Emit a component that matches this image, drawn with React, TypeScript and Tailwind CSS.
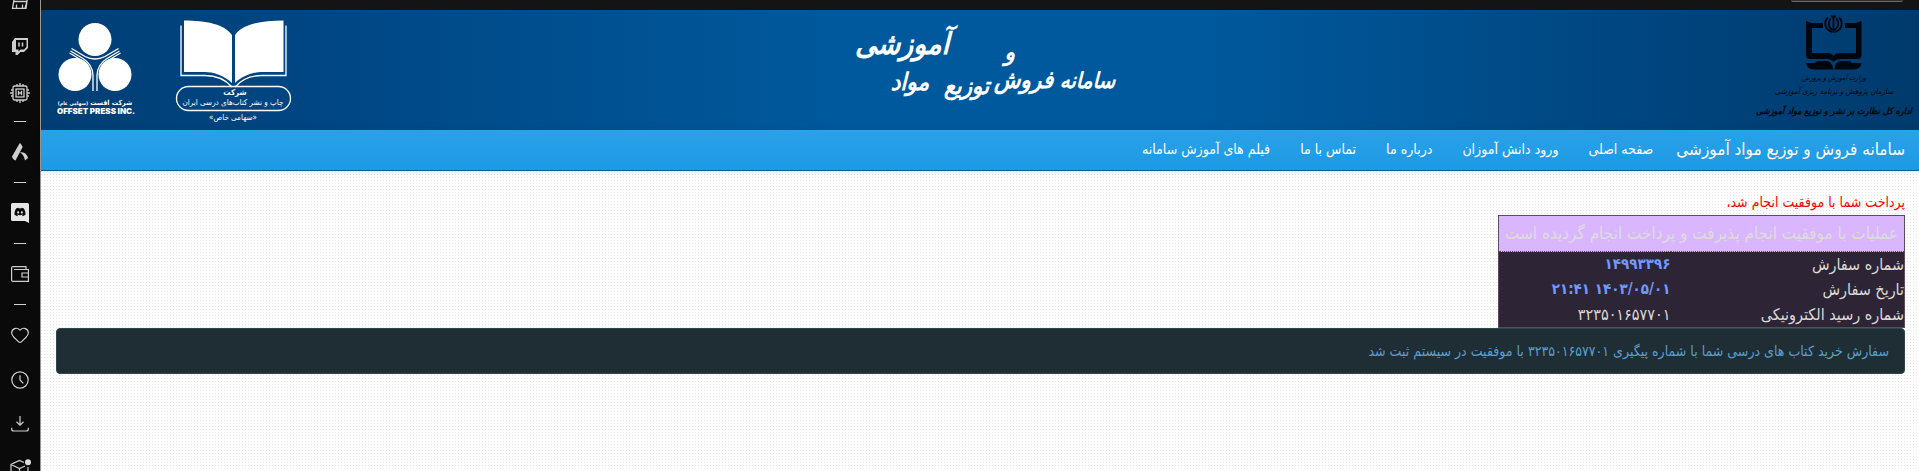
import React from "react";
import { FaDiscord } from "react-icons/fa";
import { Heart } from "lucide-react";

function Divider() {
  return <hr className="w-3 shrink-0 border-0 border-t border-[#d0d0d0]" />;
}

function RailLink({ label, children }: { label: string; children: React.ReactNode }) {
  return (
    <a href="#" aria-label={label} className="flex h-5 w-full shrink-0 items-center justify-center">
      {children}
    </a>
  );
}

function Rail() {
  return (
    <aside className="h-screen w-[41px] shrink-0 overflow-hidden border-r border-[#9a9a9a] bg-[#0a0a0a] text-[#cfcfcf]">
      <nav aria-label="Sidebar" className="flex flex-col items-center">
        <div className="flex h-[37px] w-full shrink-0 flex-col">
          <RailLink label="Marketplace">
            <svg width="18" height="20" viewBox="0 0 18 20" fill="none" stroke="currentColor" strokeWidth="1.3">
              <path d="M4 -6 1.500 8.400H15L17 -6M2.500 1.500H16M5.500 8V4.500M11.500 8V4.500M14 8.400 16 1.500" />
            </svg>
          </RailLink>
        </div>
        <RailLink label="Twitch">
          <svg width="18" height="18" viewBox="0 0 18 18" fill="none">
            <path d="M4 0H17V10L13 14H9.500L6.500 17H4.500V14H1V4Z" fill="currentColor" />
            <path d="M5 2H15.500V9L13 11.500H9.500L7.500 13.500V11.500H5Z" fill="#0a0a0a" />
            <path d="M8 4.500V8.500M11.500 4.500V8.500" stroke="currentColor" strokeWidth="1.500" />
          </svg>
        </RailLink>
        <div className="h-[26px]" />
        <RailLink label="Hardware">
          <svg width="20" height="20" viewBox="0 0 20 20" fill="none" stroke="currentColor" strokeWidth="1.300">
            <rect x="3" y="3" width="14" height="14" rx="1.500" />
            <rect x="6" y="6" width="8" height="8" />
            <path d="M8.500 7.800V12.200M11.500 7.800V12.200M8.500 10H11.500M7 1V3M10 0V3M13 1V3M7 17V19M10 17V20M13 17V19M1 7H3M0 10H3M1 13H3M17 7H19M17 10H20M17 13H19" />
          </svg>
        </RailLink>
        <div className="h-[18px]" />
        <Divider />
        <div className="h-5" />
        <RailLink label="Collections">
          <svg width="18" height="18" viewBox="0 0 18 18" fill="currentColor">
            <path d="M8.500 .4Q9 0 9.600 .5L11.500 3.500Q11.700 4 11.400 4.500L4.500 17.400C3 17.200 1.200 15.500 1 13.600Z" />
            <path d="M9 9.600C12.500 8 16.500 11.500 17 15L14 17.600C13.200 13.600 11.700 11 9 9.600Z" />
          </svg>
        </RailLink>
        <div className="h-5" />
        <Divider />
        <div className="h-5" />
        <RailLink label="Discord">
          <svg width="18" height="20" viewBox="0 0 18 20" fill="none">
            <path d="M1.500 0H16.500Q18 0 18 1.500V20L14 18H1.500Q0 18 0 16.500V1.500Q0 0 1.500 0Z" fill="#e5e5e5" />
            <FaDiscord x={3} y={3} size={12} color="#0a0a0a" />
          </svg>
        </RailLink>
        <div className="h-5" />
        <Divider />
        <div className="h-5" />
        <RailLink label="Wallet">
          <svg width="18" height="16" viewBox="0 0 18 16" fill="none" stroke="currentColor" strokeWidth="1.200">
            <path d="M15 3.500V.6H2Q.6 .6 .6 2V14Q.6 15.400 2 15.400H17.400V3.500H3M17.400 7H11V11H17.400" />
          </svg>
        </RailLink>
        <div className="h-5" />
        <Divider />
        <div className="h-5" />
        <RailLink label="Favourites">
          <Heart size={20} strokeWidth={1.4} />
        </RailLink>
        <div className="h-[25px]" />
        <RailLink label="History">
          <svg width="18" height="18" viewBox="0 0 18 18" fill="none" stroke="currentColor" strokeWidth="1.200">
            <circle cx="9" cy="9" r="8.200" />
            <path d="M9 4.200V9L12.300 12.300" />
          </svg>
        </RailLink>
        <div className="h-6" />
        <RailLink label="Downloads">
          <svg width="18" height="18" viewBox="0 0 18 18" fill="none" stroke="currentColor" strokeWidth="1.200">
            <path d="M9 1V10M5.500 6.800 9 10.200 12.500 6.800M.7 12.800V14Q.7 16 2.500 16H15.500Q17.300 16 17.300 14V12.800" />
          </svg>
        </RailLink>
        <div className="h-[25px]" />
        <RailLink label="Extensions">
          <svg width="22" height="20" viewBox="0 0 22 20" fill="none" stroke="currentColor" strokeWidth="1.200">
            <path d="M15 3.500 10.500 1.500 2 5.500V15L10.500 19 19 15V8M2 5.500 10.500 9.500 16 7M10.500 9.500V19" />
            <circle cx="19" cy="3.300" r="3" fill="#dedede" stroke="none" />
          </svg>
        </RailLink>
      </nav>
    </aside>
  );
}

function MinistryLogo() {
  return (
    <svg width="160" height="120" viewBox="0 0 160 120" role="img" aria-label="وزارت آموزش و پرورش">
      <g fill="#00060d">
        <path d="M51 11 57 13H68V18H57V43H72Q77 43 78.500 46Q80 43 85 43H101V18H90V13H101L106.500 11V45Q106.500 49 102 49H86Q81 49 78.500 52Q76 49 72 49H55Q51 49 51 45Z" />
        <path d="M51 53H60L62 51H71Q77 51 78.500 59.500H58Q52 59 51 53ZM106.500 53H97L95 51H86Q80 51 79.300 59.500H99Q105.500 59 106.500 53Z" />
      </g>
      <g fill="none" stroke="#00060d" strokeWidth="1.800">
        <path d="M78.500 7V23M73 7.500C68.500 12 69.500 19.500 77 22M84 7.500C88.500 12 87.500 19.500 80 22M75.500 8.500C72.500 13 73.500 18 77.500 20M81.500 8.500C84.500 13 83.500 18 79.500 20M76 6.500H81" />
      </g>
      <g fill="#00060d" direction="rtl" textAnchor="middle" className="font-['DejaVu_Sans_Condensed','DejaVu_Sans',sans-serif] italic">
        <text x="79" y="70" fontSize="7">وزارت آموزش و پرورش</text>
        <text x="79" y="84" fontSize="8">سازمان پژوهش و برنامه ریزی آموزشی</text>
        <text x="79" y="104" fontSize="9" fontWeight="bold">اداره کل نظارت بر نشر و توزیع مواد آموزشی</text>
      </g>
    </svg>
  );
}

function Wordmark() {
  return (
    <svg width="268" height="120" viewBox="0 0 268 120" role="img" aria-label="سامانه فروش و توزیع مواد آموزشی">
      <g fill="#fff" fontWeight="bold" direction="rtl" className="font-['DejaVu_Sans_Condensed','DejaVu_Sans',sans-serif] italic">
        <text x="264" y="78" fontSize="22">سامانه</text>
        <text x="202" y="78" fontSize="24">فروش</text>
        <text x="164" y="50" fontSize="24">و</text>
        <text x="138" y="84" fontSize="24">توزیع</text>
        <text x="78" y="80" fontSize="24">مواد</text>
        <text x="98" y="44" fontSize="30">آموزشی</text>
      </g>
    </svg>
  );
}

function BookLogo() {
  return (
    <svg width="118" height="120" viewBox="0 0 118 120" role="img" aria-label="شرکت چاپ و نشر کتاب‌های درسی ایران">
      <path d="M9 10.500C31 10.500 49 14 57 25V73C49 65 37 62 30 62H9ZM108.500 10.500C86 10.500 68 14 60 25V73C68 65 80 62 87.500 62H108.500Z" fill="#fff" />
      <g fill="none" stroke="#fff" strokeWidth="1.300">
        <path d="M6 15.500V65.500H30C41 65.500 50 69 57 77M111 15.500V65.500H87C76 65.500 67 69 60 77" />
        <rect x="1.500" y="76.500" width="114" height="24" rx="12" />
      </g>
      <g fill="#fff" direction="rtl" textAnchor="middle" className="font-['DejaVu_Sans_Condensed','DejaVu_Sans',sans-serif]">
        <text x="60" y="85" fontSize="8" fontWeight="bold">شرکت</text>
        <text x="58" y="95" fontSize="8">چاپ و نشر کتاب‌های درسی ایران</text>
        <text x="58" y="110" fontSize="8">«سهامی خاص»</text>
      </g>
    </svg>
  );
}

function OffsetLogo() {
  return (
    <svg width="82" height="120" viewBox="0 0 82 120" role="img" aria-label="Offset Press Inc.">
      <g fill="#fff">
        <circle cx="38" cy="29.500" r="16.500" />
        <circle cx="18" cy="64.500" r="16.500" />
        <circle cx="58" cy="64.500" r="16.500" />
      </g>
      <g fill="none" stroke="#fff" strokeWidth="1.300">
        <path d="M14.500 38.500 28 46.500Q38 51.500 48 46.500L61.500 38.500M13.500 41 26 48.500Q35.500 54.500 36 65V81M62.500 41 50 48.500Q40.500 54.500 40 65V81M12.500 43 25 50.500Q33 55.500 33.500 65M63.500 43 51 50.500Q43 55.500 42.500 65" />
      </g>
      <g fill="#fff" textAnchor="middle">
        <text x="38" y="95" fontSize="7" fontWeight="bold" direction="rtl" className="font-['DejaVu_Sans_Condensed','DejaVu_Sans',sans-serif]">
          شرکت افست <tspan fontSize="5">(سهامی عام)</tspan>
        </text>
        <text x="39" y="104" fontSize="8" fontWeight="900" direction="ltr" className="font-['Inter','Liberation_Sans',sans-serif]">
          OFFSET PRESS INC.
        </text>
      </g>
    </svg>
  );
}

const links = ["صفحه اصلی", "ورود دانش آموزان", "درباره ما", "تماس با ما", "فیلم های آموزش سامانه"];

const rows = [
  { label: "شماره سفارش", value: "۱۴۹۹۳۳۹۶", strong: true },
  { label: "تاریخ سفارش", value: "۱۴۰۳/۰۵/۰۱ ۲۱:۴۱", strong: true },
  { label: "شماره رسید الکترونیکی", value: "۳۲۳۵۰۱۶۵۷۷۰۱", strong: false },
];

export default function App() {
  return (
    <div className="flex min-h-screen bg-white font-['DejaVu_Sans_Condensed','DejaVu_Sans',sans-serif]">
      <Rail />
      <div
        dir="rtl"
        className="min-w-0 flex-1 bg-[linear-gradient(90deg,transparent_1px,#fff_1px),linear-gradient(#e6e6e6_1px,transparent_1px)] bg-[size:3px_3px]"
      >
        <div className="flex h-[10px] items-start bg-[#141414] px-4">
          <div className="h-[2px] w-28 rounded-b border-b border-[#6a6a6a] bg-[#303030]" />
        </div>
        <header className="grid h-[120px] grid-cols-3 bg-[linear-gradient(90deg,#003e74_0%,#004785_16%,#00599c_42%,#00599c_62%,#00437c_88%,#003a6c_100%)]">
          <div className="flex justify-start pr-1">
            <MinistryLogo />
          </div>
          <div className="flex justify-center pl-[10px]">
            <Wordmark />
          </div>
          <div className="flex justify-end gap-9 pl-4">
            <BookLogo />
            <OffsetLogo />
          </div>
        </header>
        <nav
          aria-label="منوی اصلی"
          className="flex h-[41px] items-center border-b border-[#0a5f98] bg-linear-to-b from-[#2aa1e8] to-[#1b9ae5] pb-[2px] text-sm text-white shadow-[0_1px_10px_rgba(0,0,0,0.1)]"
        >
          <a href="#" className="pr-[14px] pl-2 text-[17px]">
            سامانه فروش و توزیع مواد آموزشی
          </a>
          {links.map((link) => (
            <a key={link} href="#" className="px-[15px]">
              {link}
            </a>
          ))}
        </nav>
        <main className="pt-[19px] pr-[14px] pl-[15px]">
          <p className="mb-[1px] h-6 text-sm leading-6 text-[#ff0000]">پرداخت شما با موفقیت انجام شد،</p>
          <table className="w-[407px] border-collapse border border-[#5c4a5f] bg-[#2d2535] text-base text-[#dcdad6]">
            <thead>
              <tr>
                <th
                  colSpan={2}
                  className="h-9 border-b border-dotted border-[#6a2fd0] bg-[#dab6ff] p-0 text-center text-[17px] font-normal whitespace-nowrap text-[#dcdcdc]"
                >
                  عملیات با موفقیت انجام پذیرفت و پرداخت انجام گردیده است
                </th>
              </tr>
            </thead>
            <tbody>
              {rows.map((row) => (
                <tr key={row.label} className="h-[25px] leading-[25px]">
                  <th scope="row" className="w-[234px] p-0 text-right font-normal">
                    {row.label}
                  </th>
                  <td className={row.strong ? "p-0 text-[15px] font-bold text-[#7199ff]" : "p-0"}>{row.value}</td>
                </tr>
              ))}
            </tbody>
          </table>
          <div role="status" className="rounded border border-[#2f464c] bg-[#1f2e35] px-[15px] text-sm leading-[44px] text-[#5b9fcc]">
            سفارش خرید کتاب های درسی شما با شماره پیگیری ۳۲۳۵۰۱۶۵۷۷۰۱ با موفقیت در سیستم ثبت شد
          </div>
        </main>
      </div>
    </div>
  );
}
